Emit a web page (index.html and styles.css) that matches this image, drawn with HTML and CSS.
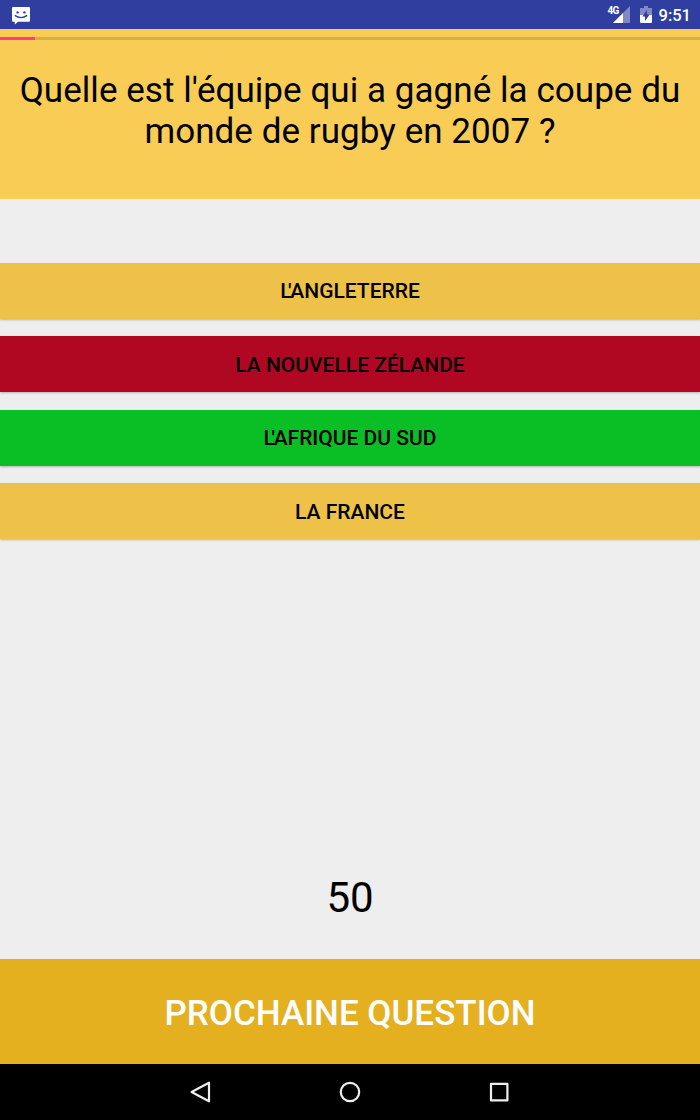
FILE: index.html
```html
<!DOCTYPE html>
<html lang="fr">
<head>
    <meta charset="UTF-8">
    <meta name="viewport" content="width=device-width, initial-scale=1.0">
    <title>Quiz</title>
    <link rel="stylesheet" href="styles.css">
</head>
<body>
    <div class="screen">
        <header class="statusBar">
            <svg class="icon-message" width="20" height="20" viewBox="0 0 20 20">
                <path fill="#fff" d="M2.2 1h15.6q1.2 0 1.2 1.2v12.4q0 1.2-1.2 1.2H7L3.8 18.6V15.8H2.2Q1 15.8 1 14.6V2.2Q1 1 2.2 1z"/>
                <circle cx="6.6" cy="6.4" r="1.2" fill="#303f9f"/>
                <circle cx="13.4" cy="6.4" r="1.2" fill="#303f9f"/>
                <path d="M3.8 9.4q6.2 4.4 12.4 0" fill="none" stroke="#303f9f" stroke-width="1.4"/>
            </svg>
            <div class="statusBar-right">
                <span class="network">4G</span>
                <svg class="icon-signal" width="18" height="18" viewBox="0 0 18 18">
                    <path fill="#8089c4" d="M17 1v17H0z"/>
                    <path fill="#fff" d="M10 8v10H0z"/>
                </svg>
                <svg class="icon-battery" width="12" height="18" viewBox="0 0 12 18">
                    <path fill="#8089c4" d="M4 0h4v2h4v8H0V2h4z"/>
                    <path fill="#fff" d="M0 9h12v7q0 1-1 1H1q-1 0-1-1z"/>
                    <path fill="#303f9f" d="M7 4v4.5h2.6L5 15v-4.6H2.4z"/>
                </svg>
                <span class="clock">9:51</span>
            </div>
        </header>

        <section class="question">
            <div class="progress"><div class="progress-value" style="width: 5%"></div></div>
            <h1>Quelle est l'équipe qui a gagné la coupe du<br>monde de rugby en 2007 ?</h1>
        </section>

        <main class="answers">
            <button class="answer"><span class="elision">L</span>'Angleterre</button>
            <button class="answer wrong">La Nouvelle Zélande</button>
            <button class="answer correct"><span class="elision">L</span>'Afrique du Sud</button>
            <button class="answer">La France</button>
        </main>

        <div class="score">50</div>
        <button class="next">Prochaine question</button>

        <nav class="navBar">
            <svg width="24" height="24" viewBox="0 0 24 24"><path d="M20 2.7v18.6L2.6 12z"/></svg>
            <svg width="24" height="24" viewBox="0 0 24 24"><circle cx="12" cy="12" r="9.2"/></svg>
            <svg width="24" height="24" viewBox="0 0 24 24"><path d="M3 3.8h16.4v16.6H3z"/></svg>
        </nav>
    </div>
</body>
</html>
```
FILE: styles.css
```css
* {
    box-sizing: border-box;
}

body {
    margin: 0;
    background-color: #eeeeee;
    font-family: Roboto, sans-serif;
    color: #000;
}

button {
    border: 0;
    padding: 0;
    font-family: inherit;
    font-weight: 500;
    text-transform: uppercase;
    cursor: pointer;
}

svg {
    display: block;
}

.screen {
    display: flex;
    flex-direction: column;
    height: 1120px;
}

.statusBar {
    display: flex;
    flex: none;
    justify-content: space-between;
    height: 29px;
    padding: 6px 9px 0 11px;
    background-color: #303f9f;
    color: #fff;
}

.statusBar-right {
    display: flex;
}

.network {
    font-size: 10px;
    line-height: 10px;
    font-weight: 700;
    letter-spacing: -0.8px;
}

.icon-signal {
    margin: -1px 0 0 -6px;
}

.icon-battery {
    margin-left: 9px;
}

.clock {
    margin-left: 7px;
    font-size: 16.5px;
    line-height: 19px;
    font-weight: 500;
}

.question {
    flex: none;
    height: 170px;
    padding-top: 8px;
    background-color: #f9cc56;
    text-align: center;
}

.progress {
    height: 3px;
    background-color: #d6af4b;
}

.progress-value {
    height: 3px;
    background-color: #ff4081;
}

h1 {
    margin: 30px 0 0;
    font-size: 35px;
    line-height: 41px;
    font-weight: 400;
    letter-spacing: 0.05px;
}

.answers {
    display: flex;
    flex-direction: column;
    gap: 17.5px;
    padding-top: 63.5px;
}

.answer {
    height: 56px;
    padding-top: 1px;
    background-color: #eec249;
    color: #000;
    font-size: 21px;
    box-shadow: 0 1px 2px rgba(0,0,0,0.25);
}

/* pulls the apostrophe in over the L */
.elision {
    letter-spacing: -3.5px;
}

.wrong {
    background-color: #b00723;
}

.correct {
    background-color: #09bf25;
}

.score {
    margin-top: auto;
    padding-bottom: 36px;
    font-size: 42px;
    line-height: 50px;
    text-align: center;
}

.next {
    flex: none;
    height: 105px;
    padding-top: 3px;
    background-color: #e4b020;
    color: #fff;
    font-size: 35px;
}

.navBar {
    display: flex;
    flex: none;
    justify-content: center;
    align-items: center;
    gap: 125.5px;
    height: 56px;
    background-color: #000;
}

.navBar svg {
    fill: none;
    stroke: #eee;
    stroke-width: 2.2;
    stroke-linejoin: round;
}
```
